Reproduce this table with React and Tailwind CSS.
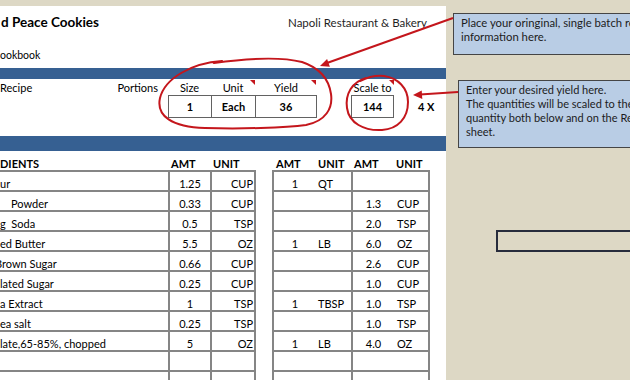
const rows = [
  { name: "ur", nameCls: "", amt: "1.25", unit: "CUP", a1: "1", u1: "QT", a2: "", u2: "" },
  { name: "Powder", nameCls: "pl-[11px]", amt: "0.33", unit: "CUP", a1: "", u1: "", a2: "1.3", u2: "CUP" },
  { name: "g  Soda", nameCls: "whitespace-pre", amt: "0.5", unit: "TSP", a1: "", u1: "", a2: "2.0", u2: "TSP" },
  { name: "ed Butter", nameCls: "", amt: "5.5", unit: "OZ", a1: "1", u1: "LB", a2: "6.0", u2: "OZ" },
  { name: "Brown Sugar", nameCls: "-ml-[5px]", amt: "0.66", unit: "CUP", a1: "", u1: "", a2: "2.6", u2: "CUP" },
  { name: "lated Sugar", nameCls: "", amt: "0.25", unit: "CUP", a1: "", u1: "", a2: "1.0", u2: "CUP" },
  { name: "a Extract", nameCls: "", amt: "1", unit: "TSP", a1: "1", u1: "TBSP", a2: "1.0", u2: "TSP" },
  { name: "ea salt", nameCls: "", amt: "0.25", unit: "TSP", a1: "", u1: "", a2: "1.0", u2: "TSP" },
  { name: "late,65-85%, chopped", nameCls: "", amt: "5", unit: "OZ", a1: "1", u1: "LB", a2: "4.0", u2: "OZ" },
  { name: "", nameCls: "", amt: "", unit: "", a1: "", u1: "", a2: "", u2: "" },
  { name: "", nameCls: "", amt: "", unit: "", a1: "", u1: "", a2: "", u2: "" },
];

function IngredientRow({ row }) {
  return (
    <div className="flex h-[20px] shrink-0 leading-[12px]">
      <div className="flex w-[256px] border-b-2 border-[#858585]">
        <div className="flex w-[168px] items-end overflow-hidden whitespace-nowrap">
          <span className={row.nameCls}>{row.name}</span>
        </div>
        <div className="flex w-[42px] items-end justify-center border-l-2 border-[#858585]">{row.amt}</div>
        <div className="flex w-[46px] items-end justify-end border-x-2 border-[#858585] pr-[1px]">{row.unit}</div>
      </div>
      <div className="ml-[16px] flex w-[158px] border-x-2 border-b-2 border-[#858585]">
        <div className="flex w-[42px] items-end justify-center">{row.a1}</div>
        <div className="flex w-[35px] items-end pl-[2px]">{row.u1}</div>
        <div className="flex w-[43px] items-end justify-center border-l-2 border-[#858585]">{row.a2}</div>
        <div className="flex w-[34px] items-end pl-[3px]">{row.u2}</div>
      </div>
    </div>
  );
}

function Annotations() {
  const red = "#c4161c";
  return (
    <svg className="pointer-events-none absolute inset-0" width="630" height="380" viewBox="0 0 630 380" fill="none">
      {/* hand drawn loop round the recipe inputs */}
      <path
        d="M222 61 C192 63 165 78 160 98 C156 116 172 127 205 128 C240 129 285 128 306 125 C326 121 333 108 331 94 C329 80 320 68 302 62 C282 57 250 58 214 63"
        stroke={red}
        strokeWidth="2"
        strokeLinecap="round"
      />
      {/* loop round scale to */}
      <path
        d="M366 78 C352 82 345 94 347 108 C349 123 364 131 382 130 C398 129 408 118 408 102 C408 88 398 78 384 76 C376 75 368 77 360 81"
        stroke={red}
        strokeWidth="2"
        strokeLinecap="round"
      />
      <line x1="453" y1="18" x2="327" y2="63" stroke={red} strokeWidth="2" />
      <polygon points="320,66 327.1,59.1 329.9,66.7" fill={red} />
      <line x1="458" y1="92" x2="420" y2="94.5" stroke={red} strokeWidth="2" />
      <polygon points="413,95 422.3,99 421.7,90.4" fill={red} />
      {/* comment markers */}
      <polygon points="250,80 255,80 255,85" fill={red} />
      <polygon points="311,80 316,80 316,85" fill={red} />
      <polygon points="389,80 394,80 394,85" fill={red} />
    </svg>
  );
}

export default function App() {
  return (
    <div className="relative flex h-[380px] w-[630px] overflow-hidden bg-[#ddd8c5] font-[family-name:Lato,sans-serif] text-[11px] leading-[14px] text-black">
      {/* sheet */}
      <div className="flex w-[446px] shrink-0 flex-col pt-[6px]">
        <div className="flex flex-1 flex-col bg-white">
          <div className="flex h-[62px] flex-col">
            <div className="flex items-baseline justify-between pr-[19px] pt-[8px]">
              <span className="pl-[1px] text-[13.5px] font-bold leading-[17px]">d Peace Cookies</span>
              <span className="text-[11.5px] leading-[15px] text-[#1f1f1f]">Napoli Restaurant &amp; Bakery</span>
            </div>
            <div className="mt-[17px] text-[10.5px]">ookbook</div>
          </div>

          <div className="h-[11px] bg-[#366092]" />

          <div className="flex h-[57px] flex-col">
            <div className="flex h-[16px] pt-[2px]">
              <div className="flex w-[168px] justify-between pr-[10px]">
                <span>Recipe</span>
                <span>Portions</span>
              </div>
              <div className="w-[43px] text-center">Size</div>
              <div className="w-[44px] text-center">Unit</div>
              <div className="w-[62px] text-center">Yield</div>
              <div className="w-[34px]" />
              <div className="w-[43px] text-center">Scale to</div>
            </div>
            <div className="flex h-[23px] items-stretch font-bold">
              <div className="w-[168px]" />
              <div className="flex border border-[#626262]">
                <div className="flex w-[42px] items-center justify-center">1</div>
                <div className="flex w-[44px] items-center justify-center border-l border-[#626262]">Each</div>
                <div className="flex w-[61px] items-center justify-center border-l border-[#626262]">36</div>
              </div>
              <div className="w-[34px]" />
              <div className="flex w-[43px] items-center justify-center border border-[#626262]">144</div>
              <div className="flex items-center pl-[24px]">4 X</div>
            </div>
          </div>

          <div className="h-[15px] bg-[#366092]" />

          <div className="flex h-[19px] items-end font-bold leading-[12px]">
            <div className="w-[168px]">DIENTS</div>
            <div className="w-[42px] pl-[3px]">AMT</div>
            <div className="w-[46px] pl-[3px]">UNIT</div>
            <div className="ml-[16px] w-[44px] pl-[4px]">AMT</div>
            <div className="w-[35px] pl-[2px]">UNIT</div>
            <div className="w-[43px] pl-[3px]">AMT</div>
            <div className="w-[36px] pl-[2px]">UNIT</div>
          </div>

          <div className="flex h-[2px] shrink-0">
            <div className="w-[256px] bg-[#858585]" />
            <div className="ml-[16px] w-[158px] bg-[#858585]" />
          </div>
          {rows.map((row, i) => (
            <IngredientRow key={i} row={row} />
          ))}
        </div>
      </div>

      {/* notes area */}
      <div className="flex min-w-0 flex-1 flex-col overflow-hidden pt-[13px] text-[#1c1c1c]">
        <div className="ml-[7px] h-[42px] w-[230px] shrink-0 whitespace-nowrap border-[1.5px] border-[#454545] bg-[#b9cde5] pl-[7px] pt-[2px] text-[11.3px]">
          <div>Place your oringinal, single batch recipe</div>
          <div>information here.</div>
        </div>
        <div className="ml-[12px] mt-[25px] h-[68px] w-[230px] shrink-0 whitespace-nowrap border-[1.5px] border-[#454545] bg-[#b9cde5] pl-[7px] pt-[2px]">
          <div>Enter your desired yield here.</div>
          <div>The quantities will be scaled to the new</div>
          <div>quantity both below and on the Recipe</div>
          <div>sheet.</div>
        </div>
        <div className="ml-[50px] mt-[82px] h-[22px] w-[200px] shrink-0 border-2 border-[#272c3c]" />
      </div>

      <Annotations />
    </div>
  );
}
